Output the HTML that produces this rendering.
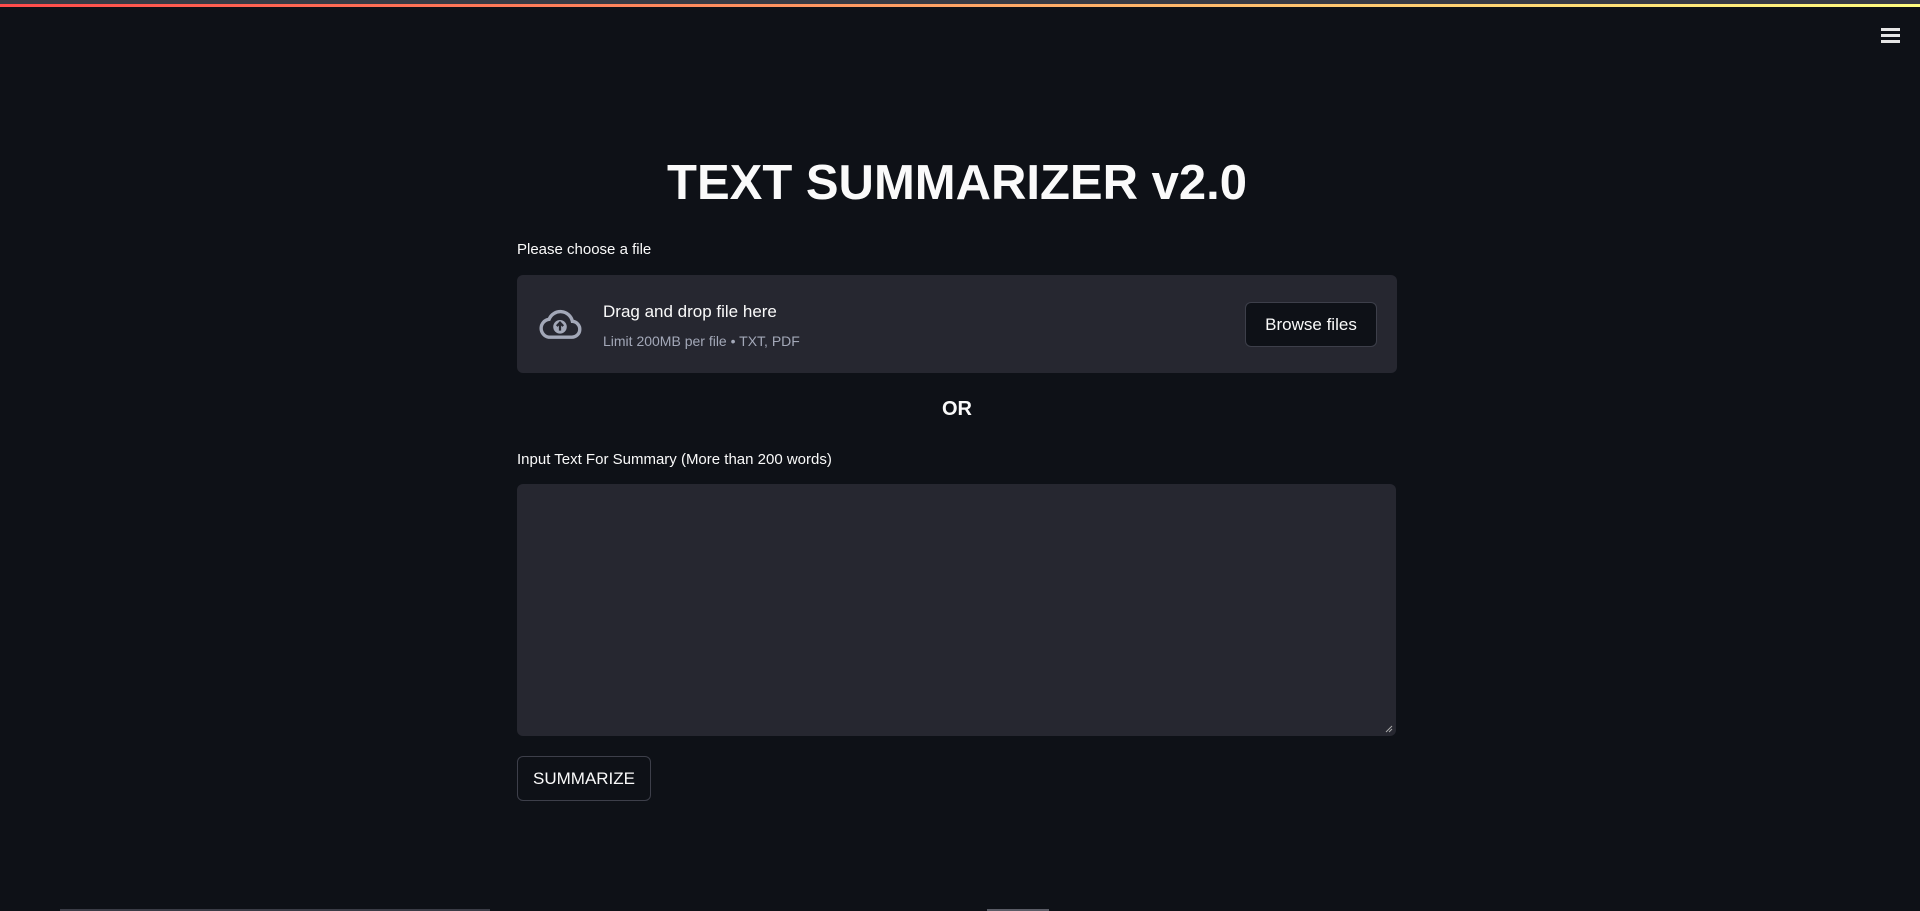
<!DOCTYPE html>
<html><head><meta charset="utf-8"><style>
html,body{margin:0;padding:0;width:1920px;height:911px;background:#0e1117;overflow:hidden;font-family:"Liberation Sans",sans-serif;color:#fafafa}
.topgray{position:absolute;left:0;top:0;width:1920px;height:4px;background:#383a44}
.deco{position:absolute;left:0;top:4px;width:1920px;height:3px;background:linear-gradient(90deg,#ff4b4b,#fffd80)}
.menu{position:absolute;left:1881px;top:28px;width:19px}
.menu div{height:3px;background:#e6e6e6;margin-bottom:3px}
h1{position:absolute;left:517px;width:880px;top:157px;margin:0;text-align:center;font-size:49px;font-weight:bold;letter-spacing:0px;line-height:52px}
.lbl{position:absolute;left:517px;font-size:15px;color:#fafafa}
.up{position:absolute;left:517px;top:275px;width:880px;height:98px;background:#262730;border-radius:6px}
.btn{position:absolute;border:1px solid #3d3f4a;border-radius:6px;background:#0e1117;color:#fafafa;font-size:17px;display:flex;align-items:center;justify-content:center;box-sizing:border-box}
.ta{position:absolute;left:517px;top:484px;width:879px;height:252px;background:#262730;border-radius:6px}
</style></head><body>
<div class="topgray"></div><div class="deco"></div>
<div class="menu"><div></div><div></div><div></div></div>
<h1>TEXT SUMMARIZER v2.0</h1>
<div class="lbl" style="top:241px">Please choose a file</div>
<div class="up">
<svg style="position:absolute;left:20px;top:33px" width="46" height="32" viewBox="0 0 24 17"><path d="M6 15.5h12a4.2 4.2 0 0 0 .6-8.4A6.5 6.5 0 0 0 6.2 6 4.8 4.8 0 0 0 6 15.5z" fill="none" stroke="#a3a8b8" stroke-width="1.8"/><circle cx="12" cy="10" r="3.6" fill="#a3a8b8"/><path d="M12 12v-4M10.3 9.6L12 7.8l1.7 1.8" stroke="#262730" stroke-width="1.2" fill="none"/></svg>
<div style="position:absolute;left:86px;top:27px;font-size:17px">Drag and drop file here</div>
<div style="position:absolute;left:86px;top:58px;font-size:14px;color:#a3a8b8">Limit 200MB per file • TXT, PDF</div>
</div>
<div class="btn" style="left:1245px;top:302px;width:132px;height:45px">Browse files</div>
<div style="position:absolute;left:517px;width:880px;top:398px;text-align:center;font-weight:bold;font-size:20px">OR</div>
<div class="lbl" style="top:451px">Input Text For Summary (More than 200 words)</div>
<div class="ta"><svg style="position:absolute;right:3px;bottom:3px" width="8" height="8"><path d="M7 1L1 7M7 4L4 7" stroke="#aaa" stroke-width="1"/></svg></div>
<div class="btn" style="left:517px;top:756px;width:134px;height:45px">SUMMARIZE</div>
<div style="position:absolute;left:60px;top:909px;width:430px;height:2px;background:#3a3c46"></div>
<div style="position:absolute;left:987px;top:909px;width:62px;height:2px;background:#5a5c66"></div>
</body></html>
